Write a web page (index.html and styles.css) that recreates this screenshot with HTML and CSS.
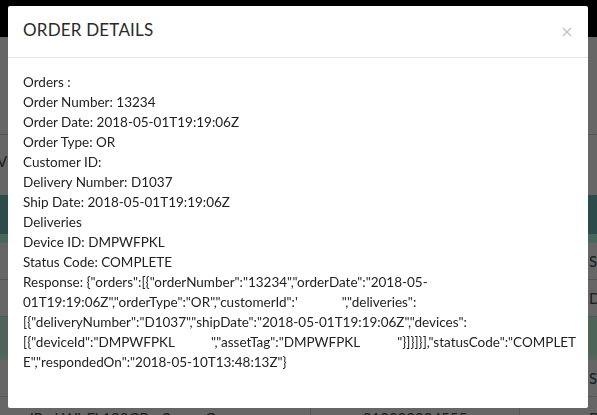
FILE: index.html
```html
<!DOCTYPE html>
<html lang="en">
<head>
<meta charset="utf-8">
<title>Order Details</title>
<link rel="stylesheet" href="styles.css">
</head>
<body>
<div class="page">
  <header class="topbar"></header>
  <main class="content">
    <div class="intro"></div>
    <div class="row row-first"><span class="cell-label">Vi</span></div>
    <div class="group-head dark"></div>
    <div class="row grid"><span></span><span></span><span></span><span class="last">S</span></div>
    <div class="row grid"><span></span><span></span><span></span><span class="last">D</span></div>
    <div class="group-head green"></div>
    <div class="row grid"><span></span><span></span><span></span><span class="last">S</span></div>
    <div class="row grid"><span class="name">iPad Wi-Fi 128GB - Space Gray</span><span class="num">210000004555</span><span></span><span class="last">D</span></div>
  </main>
</div>
<div class="backdrop"></div>
<div class="modal">
  <div class="modal-header">
    <h4 class="modal-title">ORDER DETAILS</h4>
    <button class="close" aria-label="Close">
      <svg width="10" height="10" viewBox="0 0 10 10"><path d="M1 1 L9 9 M9 1 L1 9" stroke="#c4c4c4" stroke-width="1.5" fill="none"/></svg>
    </button>
  </div>
  <div class="modal-body">
    <div class="line">Orders :</div>
    <div class="line">Order Number: 13234</div>
    <div class="line">Order Date: 2018-05-01T19:19:06Z</div>
    <div class="line">Order Type: OR</div>
    <div class="line">Customer ID:</div>
    <div class="line">Delivery Number: D1037</div>
    <div class="line">Ship Date: 2018-05-01T19:19:06Z</div>
    <div class="line">Deliveries</div>
    <div class="line">Device ID: DMPWFPKL</div>
    <div class="line">Status Code: COMPLETE</div>
    <div class="line response">Response: {"orders":[{"orderNumber":"13234","orderDate":"2018-05-<br>01T19:19:06Z","orderType":"OR","customerId":'<span class="redact r1"></span>","deliveries":<br>[{"deliveryNumber":"D1037","shipDate":"2018-05-01T19:19:06Z","devices":<br>[{"deviceId":"DMPWFPKL<span class="redact r2"></span>","assetTag":"DMPWFPKL<span class="redact r3"></span>"}]}]}],"statusCode":"COMPLET<br>E","respondedOn":"2018-05-10T13:48:13Z"}</div>
  </div>
</div>
</body>
</html>
```

FILE: styles.css
```css
* { box-sizing: border-box; }
html, body { margin: 0; padding: 0; }
body {
  width: 597px;
  height: 415px;
  overflow: hidden;
  background: #fff;
  font-family: Lato, "Liberation Sans", sans-serif;
}

.page { display: flex; flex-direction: column; }
.topbar { height: 37px; background: #000; }
.content { display: flex; flex-direction: column; }
.intro { height: 98px; border-bottom: 1px solid #d8d8d8; }
.row {
  height: 60px;
  display: flex;
  align-items: center;
  font-size: 15px;
  color: #4a4a4a;
}
.row-first .cell-label { margin-left: -3px; margin-top: -8px; }
.group-head.dark { background: #74bcbf; border-bottom: 9px solid #b6ffe6; height: 48px; }
.group-head.green { height: 43px; background: #c4fbdd; border-bottom: 4px solid #d2ffe6; }
.grid {
  display: grid;
  grid-template-columns: 310px 210px 66px 1fr;
  height: 37px;
  border-bottom: 1px solid #d8d8d8;
}
.grid span { height: 100%; display: flex; align-items: center; }
.grid span:nth-child(2) { border-left: 1px solid #d8d8d8; border-right: 1px solid #d8d8d8; justify-content: center; }
.grid .last { padding-left: 3px; }
.grid .name { padding-left: 30px; align-items: flex-start; padding-top: 12px; }
.grid .num, .grid:last-child .last { align-items: flex-start; padding-top: 12px; }

.backdrop {
  position: fixed;
  inset: 0;
  background: rgba(0, 0, 0, 0.6);
}

.modal {
  position: fixed;
  left: 8px;
  top: 6px;
  width: 580px;
  height: 402px;
  background: #fff;
  border-radius: 2px;
  display: flex;
  flex-direction: column;
  color: #222;
}
.modal-header {
  display: flex;
  align-items: center;
  justify-content: space-between;
  height: 52px;
  padding: 0 15px 3px;
  border-bottom: 1px solid #e5e5e5;
}
.modal-title {
  margin: 0;
  font-size: 17px;
  font-weight: 400;
  line-height: 20px;
  letter-spacing: 0.2px;
  color: #2a2a2a;
}
.close {
  border: 0;
  background: none;
  padding: 0;
  margin-right: 1px;
  margin-top: 3px;
  width: 10px;
  height: 10px;
  display: flex;
}
.modal-body {
  padding: 14px 15px;
  font-size: 13.5px;
  line-height: 20px;
}
.response { white-space: nowrap; }
.redact { display: inline-block; height: 1px; }
.r1 { width: 44px; }
.r2 { width: 36px; }
.r3 { width: 37px; }
```
